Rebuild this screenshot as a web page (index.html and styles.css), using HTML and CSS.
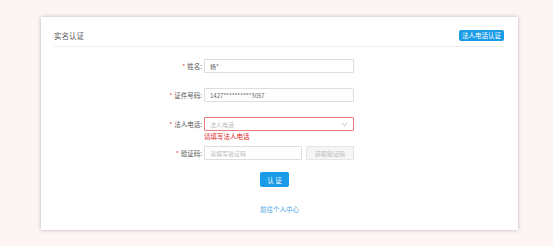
FILE: index.html
```html
<!doctype html>
<html>
    <head>
        <meta charset="utf-8">
        <title>实名认证</title>
        <link rel="stylesheet" href="styles.css">
    </head>
    <body>
        <div class="card">
            <div class="card-head">
                <span class="title">实名认证</span>
                <button type="button" class="btn-small">法人电话认证</button>
            </div>
            <form class="form" name="verify">
                <div class="row row-name">
                    <label class="label"><i>*</i>姓名:</label>
                    <div class="field">杨*</div>
                </div>
                <div class="row row-id">
                    <label class="label"><i>*</i>证件号码:</label>
                    <div class="field">1427**********3057</div>
                </div>
                <div class="row row-phone">
                    <label class="label"><i>*</i>法人电话:</label>
                    <div class="field field-error placeholder">
                        <span>法人电话</span>
                        <svg class="arrow" width="7" height="5" viewBox="0 0 7 5"><path d="M1 1.2 L3.5 3.6 L6 1.2" fill="none" stroke="#c9a3a3" stroke-width="0.9"/></svg>
                    </div>
                </div>
                <div class="row-msg">请填写法人电话</div>
                <div class="row row-code">
                    <label class="label"><i>*</i>验证码:</label>
                    <div class="field field-code placeholder">请填写验证码</div>
                    <button type="button" class="btn-code">获取验证码</button>
                </div>
                <div class="actions">
                    <button type="button" class="btn-submit">认 证</button>
                </div>
                <div class="links">
                    <a href="#" class="link">前往个人中心</a>
                </div>
            </form>
        </div>
    </body>
</html>
```

FILE: styles.css
```css
* {
    box-sizing: border-box;
}
html,
body {
    margin: 0;
    padding: 0;
    height: 100%;
}
body {
    background-color: #fdf4f4;
    font-family: "Noto Sans CJK SC", "Noto Sans", sans-serif;
    font-size: 7px;
    color: #555;
    padding-top: 17px;
}
.card {
    margin-left: 41px;
    width: 477px;
    height: 213px;
    background-color: #fff;
    box-shadow: 0 0 4px rgba(0, 0, 0, 0.25);
    padding: 0 14px 0 13px;
}
.card-head {
    display: flex;
    justify-content: space-between;
    align-items: center;
    padding: 13px 0 5px 0;
    border-bottom: 1px solid #eee;
}
.title {
    font-size: 7.5px;
    line-height: 11px;
    color: #555;
}
.btn-small {
    height: 11px;
    padding: 0 3px;
    border: 0;
    border-radius: 2px;
    background-color: #1a9be6;
    color: #fff;
    font-family: inherit;
    font-size: 6.5px;
    line-height: 11px;
}

.form {
    display: flex;
    flex-direction: column;
}
.row {
    display: flex;
    align-items: center;
    padding-left: 70px;
}
.label {
    width: 80px;
    text-align: right;
    padding-right: 2px;
    font-size: 6.5px;
    color: #555;
}
.label i {
    font-style: normal;
    color: #e5484d;
    margin-right: 2px;
}
.field {
    width: 150px;
    height: 14px;
    border: 1px solid #ddd;
    border-radius: 1px;
    padding: 0 5px;
    display: flex;
    align-items: center;
    justify-content: space-between;
    font-size: 6px;
    color: #666;
}
.placeholder {
    color: #bbb;
}
.field-error {
    border-color: #ea7b7e;
}
.row-name {
    margin-top: 12px;
}
.row-id {
    margin-top: 15px;
}
.row-phone {
    margin-top: 15px;
}
.row-msg {
    margin: 1px 0 0 150px;
    color: #e02424;
    font-size: 6.5px;
    line-height: 9px;
}
.row-code {
    margin-top: 5px;
}
.field-code {
    width: 98px;
}
.btn-code {
    margin-left: 4px;
    width: 48px;
    height: 14px;
    border: 1px solid #e6e6e6;
    background-color: #f5f5f5;
    color: #bbb;
    font-family: inherit;
    font-size: 6px;
    padding: 0;
}
.actions {
    margin-top: 12px;
    padding-left: 206px;
}
.btn-submit {
    width: 29px;
    height: 15px;
    border: 0;
    border-radius: 2px;
    background-color: #1a9be6;
    color: #fff;
    font-family: inherit;
    font-size: 6.5px;
    padding: 0;
}
.links {
    margin-top: 17px;
    padding-left: 206px;
}
.link {
    color: #4aa3df;
    text-decoration: none;
    font-size: 6.5px;
}
```
